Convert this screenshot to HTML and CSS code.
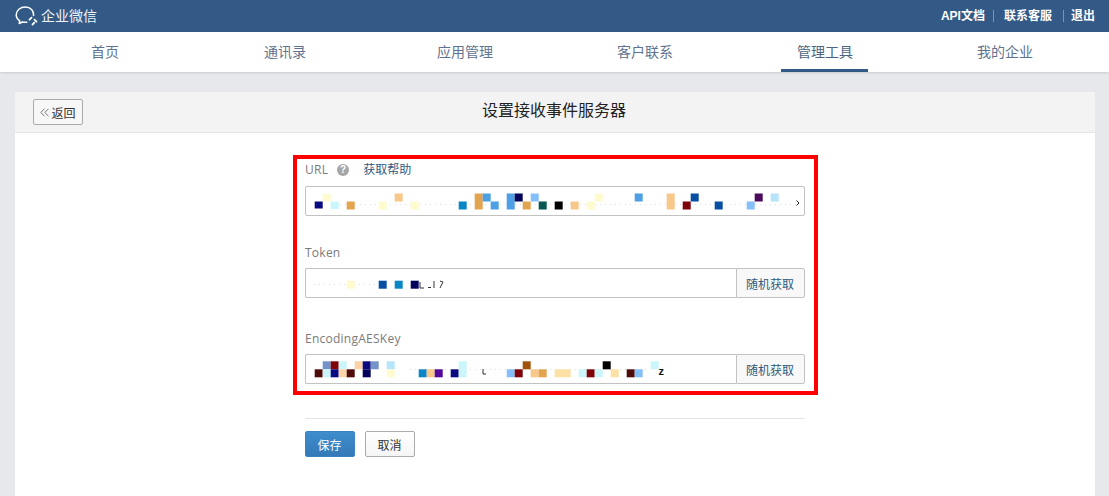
FILE: index.html
```html
<!DOCTYPE html>
<html lang="zh">
<head>
<meta charset="utf-8">
<title>设置接收事件服务器</title>
<link rel="stylesheet" href="styles.css">
</head>
<body>
<header class="topbar">
  <div class="brand">
    <svg class="brand-icon" width="23" height="20" viewBox="0 0 23 20" aria-hidden="true">
      <path d="M18.600 9.500C19.200 4.800 15.400 1 10.400 1 5.300 1 1.200 4.400 1.200 8.700c0 2.500 1.400 4.700 3.500 6.100l-.5 2.700 3.100-1.500c.9.200 1.800.3 2.800.3.600 0 1.200 0 1.700-.1" fill="none" stroke="#fff" stroke-width="1.500" stroke-linecap="round" stroke-linejoin="round"/>
      <path d="M14.500 13.700l2-2M19.500 13.700l2 2M17.500 18.500l1.800-1.800" fill="none" stroke="#fff" stroke-width="1.800" stroke-linecap="round"/>
    </svg>
    <span class="brand-name">企业微信</span>
  </div>
  <nav class="toplinks">
    <a class="toplink">API文档</a>
    <a class="toplink toplink-sep">联系客服</a>
    <a class="toplink toplink-sep toplink-last">退出</a>
  </nav>
</header>
<nav class="mainnav">
  <a class="navitem"><span class="navlabel">首页</span></a>
  <a class="navitem"><span class="navlabel">通讯录</span></a>
  <a class="navitem"><span class="navlabel">应用管理</span></a>
  <a class="navitem"><span class="navlabel">客户联系</span></a>
  <a class="navitem"><span class="navlabel navlabel-active">管理工具</span></a>
  <a class="navitem"><span class="navlabel">我的企业</span></a>
</nav>
<main class="card">
  <div class="card-head">
    <button class="back"><svg width="9" height="9" viewBox="0 0 9 9" aria-hidden="true"><path d="M4.500.8L.8 4.500l3.700 3.700M8.500.8L4.800 4.500l3.700 3.700" fill="none" stroke="#777" stroke-width="1"/></svg>返回</button>
    <h1 class="card-title">设置接收事件服务器</h1>
  </div>
  <div class="card-body">
    <form class="form">
      <div class="highlight"></div>
      <div class="group group-url">
        <div class="label label-url">URL<span class="help">?</span><a class="helplink">获取帮助</a></div>
        <div class="field">
          <svg class="mask" width="498" height="28" viewBox="306 187 498 28" aria-hidden="true">
            <path class="noise" d="M340 204.500H800"/>
            <rect class="c-navy" x="314.700" y="201.500" width="8" height="7"/>
            <rect class="c-pyellow" x="322.700" y="194" width="8" height="7.500"/>
            <rect class="c-pcyan" x="330.700" y="201.500" width="8" height="7.500"/>
            <rect class="c-orange" x="346.700" y="201.500" width="8" height="8"/>
            <rect class="c-pyellow" x="378.700" y="201.500" width="8" height="8"/>
            <rect class="c-peach" x="394.700" y="193.500" width="8" height="8"/>
            <rect class="c-pyellow" x="410.700" y="201.500" width="8" height="8"/>
            <rect class="c-blue2" x="458.700" y="201.500" width="8" height="8"/>
            <rect class="c-orange" x="474.700" y="193.500" width="8" height="16"/>
            <rect class="c-blue" x="482.700" y="193.500" width="8" height="8"/>
            <rect class="c-blue" x="490.700" y="201.500" width="8" height="8"/>
            <rect class="c-blue" x="506.700" y="193.500" width="8" height="16"/>
            <rect class="c-navy2" x="514.700" y="193.500" width="8" height="8"/>
            <rect class="c-orange" x="522.700" y="201.500" width="8" height="8"/>
            <rect class="c-lblue" x="530.700" y="193.500" width="8" height="8"/>
            <rect class="c-teal" x="538.700" y="201.500" width="8" height="8"/>
            <rect class="c-black" x="554.700" y="201.500" width="8" height="8"/>
            <rect class="c-peach" x="570.700" y="201.500" width="8" height="8"/>
            <rect class="c-pyellow" x="586.700" y="201.500" width="8" height="8"/>
            <rect class="c-pyellow" x="594.700" y="193.500" width="8" height="8"/>
            <rect class="c-blue" x="634.700" y="193.500" width="8" height="8"/>
            <rect class="c-peach" x="666.700" y="193.500" width="8" height="16"/>
            <rect class="c-dred" x="682.700" y="201.500" width="8" height="8"/>
            <rect class="c-dblue" x="690.700" y="193.500" width="8" height="8"/>
            <rect class="c-dblue" x="714.700" y="201.500" width="8" height="8"/>
            <rect class="c-lblue" x="746.700" y="201.500" width="8" height="8"/>
            <rect class="c-purple" x="754.700" y="193.500" width="8" height="8"/>
            <rect class="c-pblue" x="770.700" y="193.500" width="8" height="8"/>
            <path class="chev" d="M796.500 200.500l2.500 2.500-2.500 2.500"/>
          </svg>
        </div>
      </div>
      <div class="group group-token">
        <div class="label">Token</div>
        <div class="field-row">
          <div class="field field-joined">
            <svg class="mask" width="429" height="28" viewBox="306 269 429 28" aria-hidden="true">
              <path class="noise" d="M314 284.500H378"/>
              <rect class="c-pyellow" x="346.700" y="280.700" width="8" height="8"/>
              <rect class="c-dblue" x="378.700" y="280.700" width="8" height="8"/>
              <rect class="c-blue2" x="394.700" y="280.700" width="8" height="8"/>
              <rect class="c-navy2" x="410.700" y="280.700" width="8" height="8"/>
              <path class="ink" d="M420 282v6h4M428 287.500h3M434 281v7M440 281l3 1-3 6"/>
            </svg>
          </div>
          <button class="random" type="button">随机获取</button>
        </div>
      </div>
      <div class="group group-key">
        <div class="label">EncodingAESKey</div>
        <div class="field-row">
          <div class="field field-joined">
            <svg class="mask" width="429" height="28" viewBox="306 355 429 28" aria-hidden="true">
              <path class="noise" d="M410 369.500H650"/>
              <rect class="c-steel" x="322.700" y="361.300" width="8" height="8"/>
              <rect class="c-dred" x="330.700" y="361.300" width="8" height="8"/>
              <rect class="c-pcyan" x="338.700" y="361.300" width="8" height="8"/>
              <rect class="c-peach2" x="354.700" y="361.300" width="8" height="8"/>
              <rect class="c-navy" x="362.700" y="361.300" width="8" height="8"/>
              <rect class="c-steel" x="370.700" y="361.300" width="8" height="8"/>
              <rect class="c-pblue" x="386.700" y="361.300" width="8" height="8"/>
              <rect class="c-pcyan" x="458.700" y="361.300" width="8" height="8"/>
              <rect class="c-brown" x="522.700" y="361.300" width="8" height="8"/>
              <rect class="c-black" x="602.700" y="361.300" width="8" height="8"/>
              <rect class="c-pcyan" x="650.700" y="361.300" width="8" height="8"/>
              <rect class="c-dbrown" x="314.700" y="369.300" width="8" height="8"/>
              <rect class="c-pcyan" x="322.700" y="369.300" width="8" height="8"/>
              <rect class="c-navy" x="330.700" y="369.300" width="8" height="8"/>
              <rect class="c-peach2" x="338.700" y="369.300" width="8" height="8"/>
              <rect class="c-dbrown" x="346.700" y="369.300" width="8" height="8"/>
              <rect class="c-navy2" x="362.700" y="369.300" width="8" height="8"/>
              <rect class="c-pyellow" x="386.700" y="369.300" width="8" height="8"/>
              <rect class="c-blue2" x="418.700" y="369.300" width="8" height="8"/>
              <rect class="c-peach" x="426.700" y="369.300" width="8" height="8"/>
              <rect class="c-purple2" x="434.700" y="369.300" width="8" height="8"/>
              <rect class="c-navy" x="450.700" y="369.300" width="8" height="8"/>
              <rect class="c-pcyan" x="458.700" y="369.300" width="8" height="8"/>
              <path class="ink" d="M483 369v5h3"/>
              <rect class="c-lblue" x="506.700" y="369.300" width="8" height="8"/>
              <rect class="c-dred" x="514.700" y="369.300" width="8" height="8"/>
              <rect class="c-peach" x="530.700" y="369.300" width="8" height="8"/>
              <rect class="c-orange" x="538.700" y="369.300" width="8" height="8"/>
              <rect class="c-pyel2" x="554.700" y="369.300" width="16" height="8"/>
              <rect class="c-pcyan" x="578.700" y="369.300" width="8" height="8"/>
              <rect class="c-dred" x="586.700" y="369.300" width="8" height="8"/>
              <rect class="c-pcyan" x="594.700" y="369.300" width="8" height="8"/>
              <rect class="c-pyel2" x="610.700" y="369.300" width="8" height="8"/>
              <rect class="c-dbrown" x="626.700" y="369.300" width="8" height="8"/>
              <rect class="c-lblue" x="634.700" y="369.300" width="8" height="8"/>
              <text class="mask-text" x="658.500" y="375">z</text>
            </svg>
          </div>
          <button class="random" type="button">随机获取</button>
        </div>
      </div>
      <div class="actions">
        <button class="btn btn-primary" type="button">保存</button>
        <button class="btn" type="button">取消</button>
      </div>
    </form>
  </div>
</main>
</body>
</html>
```
FILE: styles.css
```css
* { box-sizing: border-box; }
html, body { height: 100%; }
body {
  margin: 0;
  overflow: hidden;
  display: flex;
  flex-direction: column;
  background: #e7e8eb;
  font-family: "Liberation Sans", "Noto Sans CJK SC", sans-serif;
  font-size: 12px;
  color: #333;
}
.topbar {
  flex: none;
  height: 32px;
  background: #335a87;
  display: flex;
  align-items: center;
  justify-content: space-between;
  padding: 0 14px 0 15px;
  color: #fff;
}
.brand { display: flex; align-items: center; gap: 3px; }
.brand-icon { display: block; }
.brand-name { font-size: 14px; line-height: 20px; color: #f0f3f6; }
.toplinks { display: flex; align-items: center; }
.toplink { line-height: 16px; font-weight: 700; color: #fff; }
.toplink-sep { position: relative; margin-left: 19px; }
.toplink-sep::before {
  content: "";
  position: absolute;
  left: -11px;
  top: 2px;
  width: 1px;
  height: 12px;
  background: #7a93b0;
}
.toplink-last::before { left: -8px; }
.mainnav {
  flex: none;
  height: 40px;
  background: #fff;
  padding: 0 15px;
  display: grid;
  grid-template-columns: repeat(6, 180px);
  box-shadow: 0 1px 2px rgba(0, 0, 0, .12);
  position: relative;
}
.navitem { display: flex; justify-content: center; }
.navlabel {
  height: 40px;
  padding: 0 15px;
  font-size: 14px;
  line-height: 40px;
  color: #5f7390;
}
.navlabel-active {
  margin-left: -1px;
  padding-left: 16px;
  border-bottom: 3px solid #335a87;
  color: #4d6480;
}
.card {
  flex: 1;
  min-height: 0;
  margin: 20px 14px 0 15px;
  background: #fff;
  border-radius: 3px 3px 0 0;
}
.card-head {
  height: 41px;
  background: #f3f3f4;
  border-bottom: 1px solid #e6e6e6;
  border-radius: 3px 3px 0 0;
  position: relative;
  display: flex;
  align-items: center;
  justify-content: center;
}
.back {
  position: absolute;
  left: 18px;
  top: 7px;
  width: 50px;
  height: 26px;
  padding: 0;
  display: flex;
  align-items: center;
  justify-content: center;
  gap: 2px;
  background: #f7f7f7;
  border: 1px solid #ababab;
  border-radius: 2px;
  font: inherit;
  color: #333;
}
.card-title {
  margin: 0 2px 2px 0;
  font-size: 16px;
  font-weight: 400;
  line-height: 22px;
  color: #222;
}
.card-body { display: flex; justify-content: center; }
.form { width: 500px; position: relative; padding-top: 28px; }
.highlight {
  position: absolute;
  left: -12px;
  top: 22px;
  width: 525px;
  height: 240px;
  border: 4px solid #f00;
  pointer-events: none;
}
.label {
  height: 17px;
  line-height: 17px;
  color: #7a7a7a;
  font-family: "Open Sans", "Noto Sans CJK SC", sans-serif;
  letter-spacing: .25px;
}
.label-url { display: flex; align-items: center; }
.help {
  width: 12px;
  height: 12px;
  margin-left: 9px;
  border-radius: 50%;
  background: #a6a6a6;
  color: #fff;
  font: 700 10px/12px "Liberation Sans", sans-serif;
  text-align: center;
  letter-spacing: 0;
}
.helplink { margin-left: 14px; color: #2f5b85; letter-spacing: 0; }
.group-url .label { margin-bottom: 8px; }
.group-token { margin-top: 28px; }
.group-key { margin-top: 32px; }
.group-token .label, .group-key .label { margin-bottom: 7px; }
.field {
  height: 30px;
  background: #fff;
  border: 1px solid #c2c2c2;
  border-radius: 2px;
  overflow: hidden;
}
.field-row { display: flex; }
.field-joined { flex: 1; border-right: 0; border-radius: 2px 0 0 2px; }
.mask { display: block; }
.random {
  width: 69px;
  height: 30px;
  padding: 0 1px 0 0;
  background: #f8f8f8;
  border: 1px solid #c2c2c2;
  border-radius: 0 2px 2px 0;
  font: inherit;
  color: #2f5b7c;
}
.actions {
  margin-top: 34px;
  padding-top: 12px;
  border-top: 1px solid #e4e4e4;
  display: flex;
  gap: 10px;
}
.btn {
  width: 50px;
  height: 26px;
  padding: 0 1px 0 0;
  background: linear-gradient(#fff, #f5f5f5);
  border: 1px solid #ababab;
  border-radius: 2px;
  font: inherit;
  color: #333;
}
.btn-primary {
  background: linear-gradient(#3f8dcc, #3479b8);
  border-color: #3a83c1;
  color: #fff;
}
.noise { stroke: #dcdcdc; stroke-width: 1; stroke-dasharray: 1 4; fill: none; }
.chev { stroke: #222; fill: none; stroke-width: 1; }
.ink { stroke: #333; fill: none; stroke-width: 1; }
.mask-text { font: 700 11px "Liberation Sans", sans-serif; fill: #111; }
.c-navy { fill: #0a0a80; }
.c-navy2 { fill: #04045c; }
.c-pyellow { fill: #fffbcf; }
.c-pyel2 { fill: #fde0a4; }
.c-pcyan { fill: #c9f5fb; }
.c-pblue { fill: #b5e4fb; }
.c-orange { fill: #e3a44f; }
.c-peach { fill: #f8c88a; }
.c-peach2 { fill: #fbd3a6; }
.c-blue { fill: #4ca0e3; }
.c-blue2 { fill: #0a85c6; }
.c-dblue { fill: #064fa3; }
.c-lblue { fill: #85bffa; }
.c-steel { fill: #7494c9; }
.c-teal { fill: #075652; }
.c-black { fill: #000; }
.c-dred { fill: #7f0409; }
.c-dbrown { fill: #4f0a0a; }
.c-brown { fill: #a2540c; }
.c-purple { fill: #4b0a5b; }
.c-purple2 { fill: #55099a; }
```
